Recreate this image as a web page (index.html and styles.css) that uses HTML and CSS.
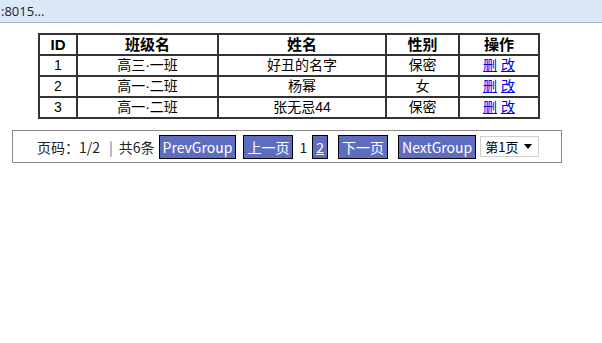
FILE: index.html
```html
<!DOCTYPE html>
<html>
<head>
<meta charset="utf-8">
<link rel="stylesheet" href="styles.css">
</head>
<body>
<div class="topbar"><span class="tab-title">:8015...</span></div>
<table class="grid">
  <colgroup>
    <col class="c-id"><col class="c-class"><col class="c-name"><col class="c-sex"><col class="c-op">
  </colgroup>
  <tr><th>ID</th><th>班级名</th><th>姓名</th><th>性别</th><th>操作</th></tr>
  <tr><td>1</td><td>高三·一班</td><td>好丑的名字</td><td>保密</td><td><a href="#">删</a> <a href="#">改</a></td></tr>
  <tr><td>2</td><td>高一·二班</td><td>杨幂</td><td>女</td><td><a href="#">删</a> <a href="#">改</a></td></tr>
  <tr><td>3</td><td>高一·二班</td><td>张无忌44</td><td>保密</td><td><a href="#">删</a> <a href="#">改</a></td></tr>
</table>
<div class="pager">
  <span class="info">页码：1/2</span>
  <span class="sep">|</span>
  <span class="info">共6条</span>
  <a class="btn first" href="#">PrevGroup</a>
  <a class="btn gap" href="#">上一页</a>
  <span class="cur">1</span>
  <a class="btn num" href="#">2</a>
  <a class="btn gap-l" href="#">下一页</a>
  <a class="btn gap-l" href="#">NextGroup</a>
  <span class="select"><span class="sel-text">第1页</span><span class="arrow"></span></span>
</div>
</body>
</html>
```

FILE: styles.css
```css
html, body {
  margin: 0;
  padding: 0;
  background: #fff;
}
.topbar {
  height: 22px;
  background: #dae8f7;
  border-bottom: 1px solid #a9b4c2;
  display: flex;
  align-items: center;
  overflow: hidden;
}
.tab-title {
  font-family: "Open Sans", "Noto Sans", sans-serif;
  font-size: 13px;
  color: #1a1a1a;
  margin-left: 1px;
}
.grid {
  margin: 10px 0 0 38px;
  width: 500px;
  border-collapse: collapse;
  border: 2px solid #222;
  font-family: "Liberation Sans", "Noto Sans CJK SC", sans-serif;
  font-size: 14px;
  table-layout: fixed;
}
.c-id { width: 38px; }
.c-class { width: 141px; }
.c-name { width: 168px; }
.c-sex { width: 73px; }
.c-op { width: 80px; }
.grid th, .grid td {
  border: 2px solid #333;
  text-align: center;
  height: 19px;
  padding: 0;
  line-height: 19px;
  color: #000;
  font-weight: normal;
}
.grid th {
  font-weight: bold;
  font-size: 15px;
}
.grid a {
  color: #0000ee;
  text-decoration: underline;
}
.pager {
  margin: 11px 0 0 12px;
  width: 550px;
  height: 33px;
  border: 1px solid #8a8a8a;
  box-sizing: border-box;
  display: flex;
  align-items: center;
  padding-left: 24px;
  font-family: "Noto Sans CJK SC", sans-serif;
  font-size: 14px;
  color: #222;
}
.sep {
  color: #2b7bd0;
  margin: 0 6px 0 9px;
}
.btn {
  display: inline-flex;
  align-items: center;
  height: 22px;
  padding: 0 3px;
  background: #5f6dc0;
  border: 1px solid #000;
  color: #fff;
  text-decoration: none;
}
.btn.first {
  margin-left: 4px;
}
.btn.gap {
  margin-left: 7px;
}
.btn.gap-l {
  margin-left: 10px;
}
.btn.num {
  text-decoration: underline;
  padding: 0 3px;
}
.cur {
  margin: 0 5px 0 6px;
}
.select {
  margin-left: 4px;
  width: 59px;
  height: 21px;
  box-sizing: border-box;
  border: 1px solid #d0d0d0;
  background: #fff;
  display: inline-flex;
  align-items: center;
  justify-content: space-between;
  padding: 0 6px 0 4px;
  font-size: 13px;
  color: #000;
}
.arrow {
  width: 0;
  height: 0;
  border-left: 4px solid transparent;
  border-right: 4px solid transparent;
  border-top: 5px solid #000;
}
```
